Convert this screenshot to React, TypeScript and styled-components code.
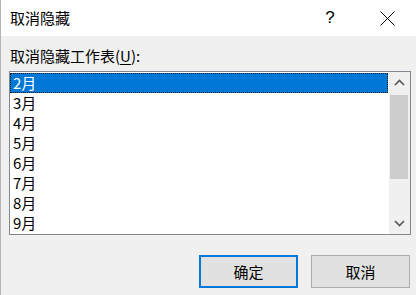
import * as React from "react";
import styled, { createGlobalStyle } from "styled-components";

const GlobalStyle = createGlobalStyle`
  html, body {
    margin: 0;
    padding: 0;
    background: #f0f0f0;
  }
  body {
    font-family: "Noto Sans CJK SC", "Liberation Sans", sans-serif;
    font-size: 15px;
    color: #000;
  }
`;

const Dialog = styled.div`
  width: 416px;
  height: 295px;
  box-sizing: border-box;
  border-left: 1px solid #b4b4b4;
  background: #f0f0f0;
  display: flex;
  flex-direction: column;
`;

const TitleBar = styled.div`
  height: 36px;
  background: #fff;
  display: flex;
  align-items: center;
  padding-left: 9px;
  padding-right: 6px;
`;

const Title = styled.div`
  flex: 1;
  font-size: 15px;
  line-height: 20px;
`;

const TitleButton = styled.div`
  width: 46px;
  height: 36px;
  display: flex;
  align-items: center;
  justify-content: center;
  color: #000;
`;

const Help = styled(TitleButton)`
  margin-right: 11px;
  font-family: "Liberation Sans", sans-serif;
  font-size: 17px;
`;

const Body = styled.div`
  flex: 1;
  display: flex;
  flex-direction: column;
  padding: 10px 5px 0 8px;
`;

const Label = styled.div`
  line-height: 20px;
  padding-left: 1px;
  margin-bottom: 5px;

  u {
    text-decoration: underline;
    text-underline-offset: 2px;
  }
`;

const ListBox = styled.div`
  width: 402px;
  height: 164px;
  box-sizing: border-box;
  border: 1px solid #828790;
  background: #fff;
  display: flex;
`;

const Items = styled.div`
  flex: 1;
  padding: 1px 1px 1px 0;
`;

const Item = styled.div<{ $selected?: boolean }>`
  height: 20px;
  line-height: 20px;
  padding-left: 3px;
  box-sizing: border-box;
  background: ${p => (p.$selected ? "#0078d7" : "transparent")};
  color: ${p => (p.$selected ? "#fff" : "#000")};
  outline: ${p => (p.$selected ? "1px dotted #1a1a1a" : "none")};
  outline-offset: -1px;
`;

const ScrollBar = styled.div`
  width: 21px;
  background: #f0f0f0;
  display: flex;
  flex-direction: column;
`;

const Arrow = styled.div`
  height: 21px;
  display: flex;
  align-items: center;
  justify-content: center;
`;

const Track = styled.div`
  flex: 1;
  display: flex;
  flex-direction: column;
  padding: 2px 2px 0 1px;
`;

const Thumb = styled.div`
  height: 84px;
  background: #cdcdcd;
`;

const Buttons = styled.div`
  display: flex;
  justify-content: flex-end;
  gap: 13px;
  margin-top: 20px;
  padding-right: 1px;
`;

const Button = styled.div<{ $default?: boolean }>`
  width: 99px;
  height: 33px;
  box-sizing: border-box;
  display: flex;
  align-items: center;
  justify-content: center;
  background: #e1e1e1;
  border: ${p => (p.$default ? "2px solid #0078d7" : "1px solid #adadad")};
  font-size: 15px;
`;

const Chevron = ({ up }: { up?: boolean }) => (
  <svg width="11" height="7" viewBox="0 0 11 7">
    <path
      d={up ? "M1 6 L5.5 1.5 L10 6" : "M1 1 L5.5 5.5 L10 1"}
      fill="none"
      stroke="#5a5a5a"
      strokeWidth="1.7"
    />
  </svg>
);

const months = ["2月", "3月", "4月", "5月", "6月", "7月", "8月", "9月"];

const App = () => {
  return (
    <>
      <GlobalStyle />
      <Dialog>
        <TitleBar>
          <Title>取消隐藏</Title>
          <Help>?</Help>
          <TitleButton>
            <svg width="15" height="15" viewBox="0 0 15 15">
              <path d="M0.5 0.5 L14.5 14.5 M14.5 0.5 L0.5 14.5" stroke="#000" strokeWidth="1" />
            </svg>
          </TitleButton>
        </TitleBar>
        <Body>
          <Label>
            取消隐藏工作表(<u>U</u>):
          </Label>
          <ListBox>
            <Items>
              {months.map((m, i) => (
                <Item key={m} $selected={i === 0}>
                  {m}
                </Item>
              ))}
            </Items>
            <ScrollBar>
              <Arrow>
                <Chevron up />
              </Arrow>
              <Track>
                <Thumb />
              </Track>
              <Arrow>
                <Chevron />
              </Arrow>
            </ScrollBar>
          </ListBox>
          <Buttons>
            <Button $default>确定</Button>
            <Button>取消</Button>
          </Buttons>
        </Body>
      </Dialog>
    </>
  );
};

export default App;
